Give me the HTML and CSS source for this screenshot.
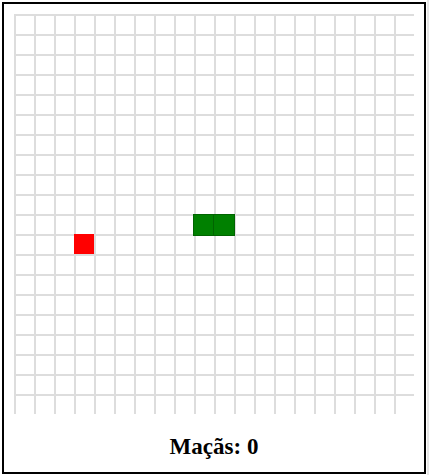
FILE: index.html
```html
<!DOCTYPE html>
<html lang="pt">
<head>
<meta charset="utf-8">
<title>Snake</title>
<link rel="stylesheet" href="styles.css">
</head>
<body>
  <div class="game">
    <div class="board">
      <div class="apple" style="grid-column: 4; grid-row: 12;"></div>
      <div class="segment" style="grid-column: 10; grid-row: 11;"></div>
      <div class="segment" style="grid-column: 11; grid-row: 11;"></div>
    </div>
    <div class="score">Maçãs: 0</div>
  </div>
</body>
</html>
```

FILE: styles.css
```css
html {
  margin: 0;
  min-height: 100%;
  background: linear-gradient(to left, #e6e6e6 2px, #ffffff 2px);
}

body {
  margin: 0;
  padding: 2px;
  font-family: "Liberation Serif", "Times New Roman", serif;
}

.game {
  width: 400px;
  border: 2px solid #000;
  padding: 10px 10px 12px;
  background: #fff;
}

.board {
  width: 400px;
  height: 400px;
  display: grid;
  grid-template-columns: repeat(20, 20px);
  grid-template-rows: repeat(20, 20px);
  background-image:
    linear-gradient(to right, #dddddd 2px, transparent 2px),
    linear-gradient(to bottom, #dddddd 2px, transparent 2px);
  background-size: 20px 100%, 100% 20px;
}

.apple {
  width: 20px;
  height: 20px;
  background: #ff0000;
}

.segment {
  box-sizing: border-box;
  width: 22px;
  height: 22px;
  margin-left: -1px;
  background: #008000;
  border: 1px solid #006400;
}

.score {
  margin-top: 20px;
  height: 26px;
  line-height: 26px;
  font-size: 23px;
  font-weight: bold;
  text-align: center;
  color: #000;
}
```
